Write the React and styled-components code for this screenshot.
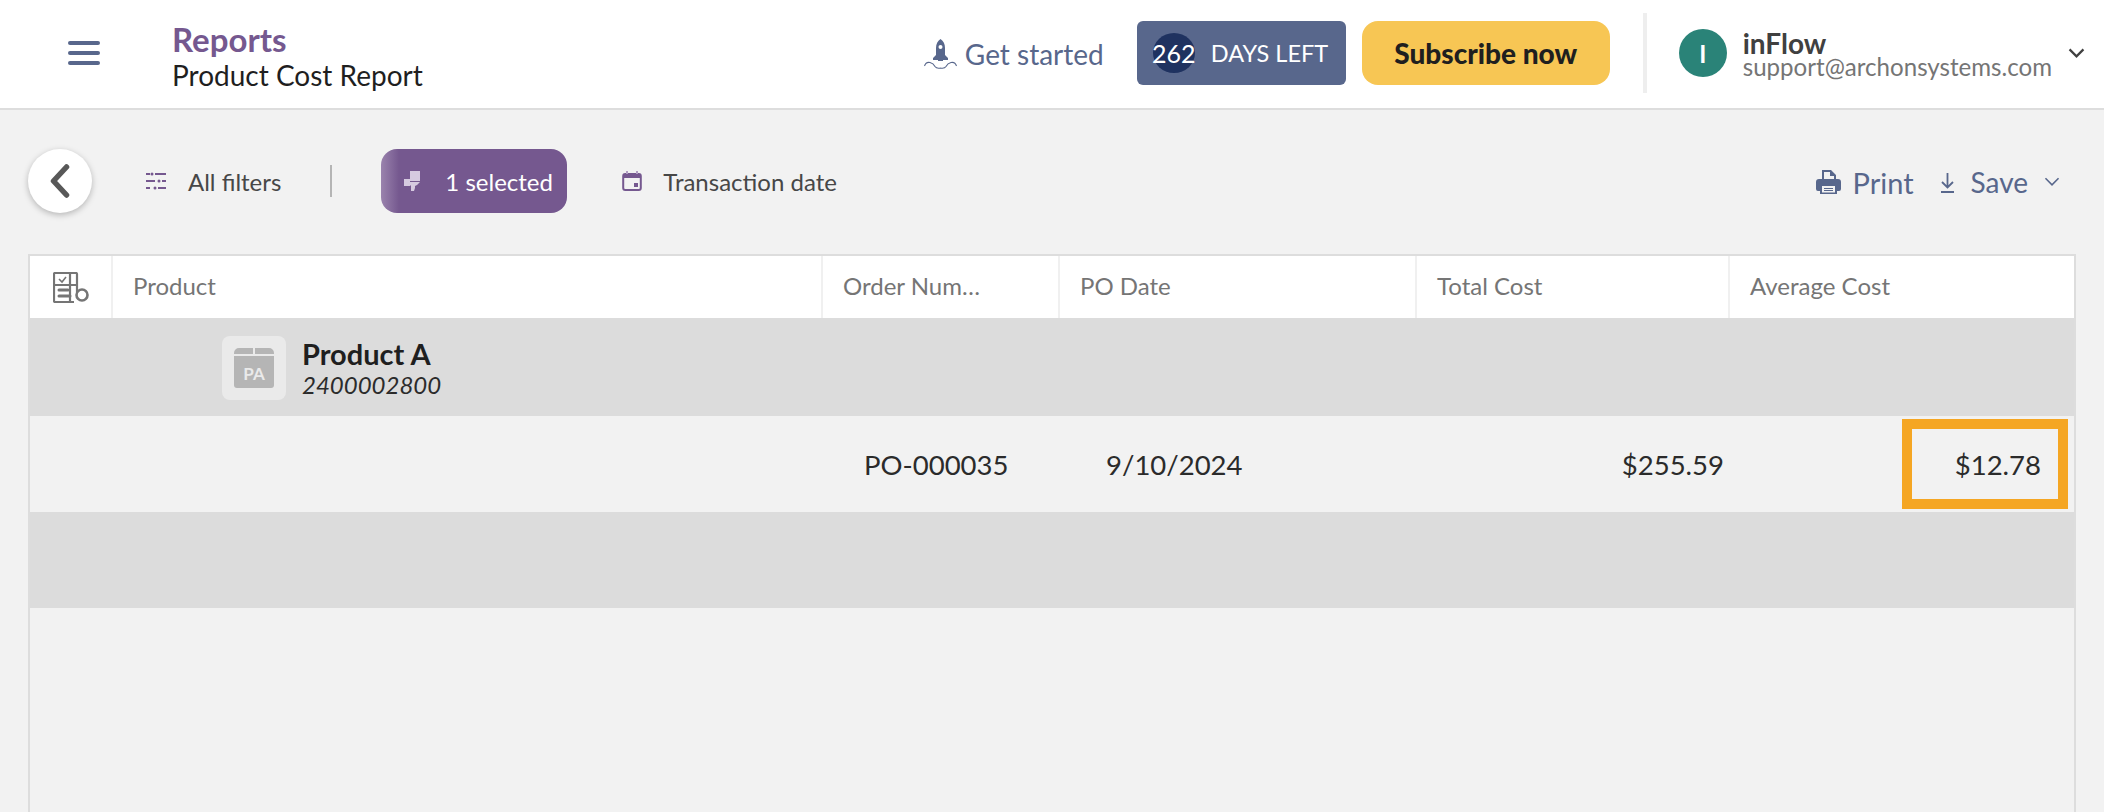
import React from "react";
import styled, { createGlobalStyle } from "styled-components";

const GlobalStyle = createGlobalStyle`
  html, body {
    margin: 0;
    height: 100%;
    background: #f2f2f2;
    font-family: Lato, "Open Sans", sans-serif;
    overflow: hidden;
  }
  * { box-sizing: border-box; }
`;

const Page = styled.div`
  width: 2104px;
  height: 812px;
  display: flex;
  flex-direction: column;
  overflow: hidden;
  background: #f2f2f2;
`;

const Header = styled.header`
  height: 110px;
  flex: none;
  display: flex;
  align-items: center;
  background: #fff;
  border-bottom: 2px solid #dddddd;
  padding: 0 19px 2px 68px;
`;

const MenuButton = styled.div`
  width: 32px;
  display: flex;
  flex-direction: column;
  gap: 6px;
  margin-right: 72px;
`;

const MenuBar = styled.span`
  height: 4px;
  border-radius: 2px;
  background: #58678c;
`;

const TitleBlock = styled.div`
  display: flex;
  flex-direction: column;
  padding-top: 7px;
`;

const Section = styled.div`
  font-size: 33px;
  line-height: 36px;
  font-weight: 700;
  color: #75588f;
`;

const PageName = styled.div`
  font-size: 28px;
  line-height: 36px;
  color: #1f1f1f;
`;

const HeaderRight = styled.div`
  margin-left: auto;
  display: flex;
  align-items: center;
`;

const GetStarted = styled.div`
  display: flex;
  align-items: center;
  gap: 8px;
  padding-top: 2px;
  font-size: 28px;
  color: #58678c;
  margin-right: 33px;
`;

const DaysBadge = styled.div`
  width: 209px;
  height: 64px;
  display: flex;
  align-items: center;
  padding-left: 16px;
  gap: 16px;
  border-radius: 6px;
  background: #58678c;
  color: #fff;
  font-size: 23.5px;
  white-space: nowrap;
  margin-right: 16px;
`;

const DaysCount = styled.span`
  width: 42px;
  height: 40px;
  flex: none;
  display: flex;
  align-items: center;
  justify-content: center;
  border-radius: 50%;
  background: #1f3260;
  font-size: 25px;
  white-space: nowrap;
`;

const SubscribeButton = styled.button`
  width: 248px;
  height: 64px;
  border: none;
  border-radius: 16px;
  background: #f7c654;
  color: #1f1f1f;
  font-family: inherit;
  font-size: 28px;
  font-weight: 900;
`;

const VerticalRule = styled.div`
  width: 4px;
  height: 80px;
  margin: 0 32px 0 33px;
  background: #eeeeee;
`;

const Avatar = styled.div`
  width: 48px;
  height: 48px;
  display: flex;
  align-items: center;
  justify-content: center;
  border-radius: 50%;
  background: #2a8378;
  color: #fff;
  font-size: 24px;
  font-weight: 700;
  margin-right: 16px;
`;

const Account = styled.div`
  display: flex;
  flex-direction: column;
  padding-top: 3px;
  margin-right: 16px;
`;

const AccountName = styled.div`
  font-size: 28px;
  line-height: 24px;
  font-weight: 700;
  color: #404040;
`;

const AccountEmail = styled.div`
  font-size: 24.1px;
  line-height: 24px;
  color: #757575;
`;

const Toolbar = styled.div`
  height: 144px;
  flex: none;
  display: flex;
  align-items: center;
  padding: 0 44px 2px 28px;
  font-size: 24px;
  color: #474747;
`;

const BackButton = styled.div`
  width: 64px;
  height: 64px;
  flex: none;
  display: flex;
  align-items: center;
  justify-content: center;
  border-radius: 50%;
  background: #fff;
  box-shadow: 0 2px 6px rgba(0, 0, 0, 0.25);
  margin-right: 54px;
`;

const FilterItem = styled.div`
  display: flex;
  align-items: center;
  gap: ${(props) => props.$gap}px;
`;

const ToolbarRule = styled.div`
  width: 2px;
  height: 32px;
  background: #b5b5b5;
  margin: 0 49px;
`;

const SelectedChip = styled.div`
  width: 186px;
  height: 64px;
  display: flex;
  align-items: center;
  gap: 24px;
  padding-left: 23px;
  border-radius: 16px;
  background: linear-gradient(90deg, #9a83ad 0, #75588f 18px);
  color: #fff;
  margin-right: 55px;
`;

const ToolbarActions = styled.div`
  margin-left: auto;
  display: flex;
  align-items: center;
  padding-top: 2px;
  color: #58678c;
  font-size: 28px;
`;

const ActionItem = styled.div`
  display: flex;
  align-items: center;
  gap: ${(props) => props.$gap}px;
  margin-left: ${(props) => props.$left}px;
  font-size: ${(props) => props.$size || 28}px;
`;

const Table = styled.div`
  flex: 1;
  margin: 0 28px 0 28px;
  border: solid #dddddd;
  border-width: 2px 2px 0 2px;
`;

const Row = styled.div`
  display: grid;
  grid-template-columns: 81px 710px 237px 357px 313px 1fr;
  height: ${(props) => props.$height}px;
  background: ${(props) => props.$bg};
`;

const HeadCell = styled.div`
  display: flex;
  align-items: center;
  padding-left: ${(props) => props.$pad || 20}px;
  padding-bottom: ${(props) => (props.$first ? 0 : 3)}px;
  border-left: ${(props) => (props.$first ? "none" : "2px solid #f0f0f0")};
  font-size: 24px;
  color: #757575;
  white-space: nowrap;
`;

const ProductCell = styled.div`
  grid-column: 2;
  display: flex;
  align-items: center;
  gap: 16px;
  padding: 2px 0 0 111px;
`;

const ProductThumb = styled.div`
  width: 64px;
  height: 64px;
  display: flex;
  align-items: center;
  justify-content: center;
  border-radius: 8px;
  background: #eaeaea;
`;

const ProductName = styled.div`
  font-size: 29px;
  line-height: 34px;
  font-weight: 700;
  color: #1f1f1f;
`;

const ProductCode = styled.div`
  font-size: 24px;
  line-height: 28px;
  font-style: italic;
  color: #2b2b2b;
`;

const DataCell = styled.div`
  grid-column: ${(props) => props.$col};
  display: flex;
  align-items: center;
  justify-content: ${(props) => (props.$right ? "flex-end" : "flex-start")};
  padding-left: ${(props) => props.$pad || 0}px;
  padding-right: ${(props) => (props.$right ? 4 : 0)}px;
  font-size: 27.5px;
  color: #2b2b2b;
`;

const Highlight = styled.div`
  width: 166px;
  height: 90px;
  margin: 0 2px 0 0;
  display: flex;
  align-items: center;
  justify-content: flex-end;
  padding-right: 17px;
  border: 10px solid #f5a623;
`;

const MenuIcon = () => (
  <MenuButton>
    <MenuBar />
    <MenuBar />
    <MenuBar />
  </MenuButton>
);

const RocketIcon = () => (
  <svg width="33" height="30" viewBox="0 0 33 30" fill="none">
    <path
      d="M16.500 0c3 2 4.500 5 4.500 9v7l3 3v2h-5v1h-5v-1H9v-2l3-3V9c0-4 1.500-7 4.500-9z"
      fill="#58678c"
    />
    <circle cx="16.500" cy="8" r="2" fill="#fff" />
    <path
      d="M.5 27c1-3 3.500-4 5.500-3.500 2.500.6 4 2 5 4 1 1.500 3 2 5.500 1.500M32.500 27c-1-3-3.500-4-5.500-3.500-2.500.6-4 2-5 4-1 1.500-3 2-5.500 1.500"
      stroke="#58678c"
      strokeWidth="1.100"
    />
  </svg>
);

const ChevronDown = ({ width, color, stroke }) => (
  <svg width={width} height={width * 0.6} viewBox="0 0 18 11" fill="none">
    <path d="M1.500 1.500 9 9l7.500-7.500" stroke={color} strokeWidth={stroke} />
  </svg>
);

const BackIcon = () => (
  <svg width="20" height="34" viewBox="0 0 20 34" fill="none">
    <path
      d="M16.500 3 3.500 17l13 14"
      stroke="#585858"
      strokeWidth="5.500"
      strokeLinecap="round"
      strokeLinejoin="round"
    />
  </svg>
);

const FiltersIcon = () => (
  <svg width="20" height="18" viewBox="0 0 20 18" fill="#75588f">
    <rect x="0" y="1" width="4" height="2" />
    <rect x="9" y="1" width="11" height="2" />
    <circle cx="6" cy="2" r="1.500" />
    <rect x="0" y="8" width="9" height="2" />
    <rect x="16" y="8" width="4" height="2" />
    <circle cx="13" cy="9" r="1.500" />
    <rect x="0" y="15" width="4" height="2" />
    <rect x="12" y="15" width="8" height="2" />
    <circle cx="9" cy="16" r="1.500" />
  </svg>
);

const SelectedIcon = () => (
  <svg width="17" height="21" viewBox="0 0 17 21" fill="#d6cae0">
    <rect x="6" y="0" width="10" height="10" />
    <rect x="0" y="8" width="6" height="7" />
    <path d="M6 11h10l-3 3-2 1v2l-1 3H7v-5l-1-1z" />
  </svg>
);

const CalendarIcon = () => (
  <svg width="20" height="20" viewBox="0 0 20 20" fill="none">
    <rect x="1.200" y="3" width="17.600" height="16" rx="2" stroke="#75588f" strokeWidth="2" />
    <rect x="1" y="3" width="18" height="4" fill="#75588f" />
    <rect x="4" y="0" width="2" height="3" fill="#b09dc2" />
    <rect x="14" y="0" width="2" height="3" fill="#b09dc2" />
    <rect x="12" y="12" width="4" height="4" fill="#75588f" />
  </svg>
);

const PrintIcon = () => (
  <svg width="25" height="24" viewBox="0 0 25 24" fill="#58678c">
    <path d="M6 0h9l5 5v5h-2V6h-4V2H8v8H6z" />
    <path d="M3 9h19a3 3 0 0 1 3 3v7a2 2 0 0 1-2 2h-2v3H4v-3H2a2 2 0 0 1-2-2v-7a3 3 0 0 1 3-3z" />
    <rect x="6" y="16" width="13" height="6.500" fill="#f2f2f2" />
    <rect x="8" y="18" width="9" height="1" />
    <rect x="8" y="20" width="9" height="1" />
  </svg>
);

const SaveIcon = () => (
  <svg width="15" height="21" viewBox="0 0 15 21" fill="none" stroke="#58678c" strokeWidth="1.800">
    <path d="M7.500 1v14M2 10l5.500 5.500L13 10M1 20h13" />
  </svg>
);

const ColumnsIcon = () => (
  <svg width="36" height="31" viewBox="0 0 36 31" fill="none" stroke="#757575">
    <path d="M24 20V2a1 1 0 0 0-1-1H2a1 1 0 0 0-1 1v27a1 1 0 0 0 1 1h19" strokeWidth="2.200" />
    <path d="M1 13h23M17 1v28" strokeWidth="2.200" />
    <path d="M6 7l3 3 4-5" strokeWidth="1.600" />
    <path d="M6 18h9M6 24h11" strokeWidth="3" strokeLinecap="round" />
    <circle cx="29" cy="23" r="5.500" strokeWidth="2.600" />
  </svg>
);

const BoxIcon = () => (
  <svg width="40" height="40" viewBox="0 0 40 40">
    <path d="M5 0h14v6H0v-1a5 5 0 0 1 5-5zM21 0h14a5 5 0 0 1 5 5v1H21z" fill="#b5b5b5" />
    <path d="M0 8h40v29a3 3 0 0 1-3 3H3a3 3 0 0 1-3-3z" fill="#b5b5b5" />
    <text
      x="20"
      y="32"
      textAnchor="middle"
      fontFamily="Lato, sans-serif"
      fontSize="17"
      fontWeight="700"
      fill="#eaeaea"
    >
      PA
    </text>
  </svg>
);

const App = () => {
  return (
    <Page>
      <GlobalStyle />
      <Header>
        <MenuIcon />
        <TitleBlock>
          <Section>Reports</Section>
          <PageName>Product Cost Report</PageName>
        </TitleBlock>
        <HeaderRight>
          <GetStarted>
            <RocketIcon />
            Get started
          </GetStarted>
          <DaysBadge>
            <DaysCount>262</DaysCount>
            DAYS LEFT
          </DaysBadge>
          <SubscribeButton>Subscribe now</SubscribeButton>
          <VerticalRule />
          <Avatar>I</Avatar>
          <Account>
            <AccountName>inFlow</AccountName>
            <AccountEmail>support@archonsystems.com</AccountEmail>
          </Account>
          <ChevronDown width={17} color="#404040" stroke={2.4} />
        </HeaderRight>
      </Header>

      <Toolbar>
        <BackButton>
          <BackIcon />
        </BackButton>
        <FilterItem $gap={22}>
          <FiltersIcon />
          All filters
        </FilterItem>
        <ToolbarRule />
        <SelectedChip>
          <SelectedIcon />1 selected
        </SelectedChip>
        <FilterItem $gap={21}>
          <CalendarIcon />
          Transaction date
        </FilterItem>
        <ToolbarActions>
          <ActionItem $gap={12} $left={0} $size={29}>
            <PrintIcon />
            Print
          </ActionItem>
          <ActionItem $gap={16} $left={26}>
            <SaveIcon />
            Save
          </ActionItem>
          <ActionItem $gap={0} $left={16}>
            <ChevronDown width={16} color="#58678c" stroke={1.8} />
          </ActionItem>
        </ToolbarActions>
      </Toolbar>

      <Table>
        <Row $height={62} $bg="#fff">
          <HeadCell $first $pad={23}>
            <ColumnsIcon />
          </HeadCell>
          <HeadCell>Product</HeadCell>
          <HeadCell>Order Num…</HeadCell>
          <HeadCell>PO Date</HeadCell>
          <HeadCell>Total Cost</HeadCell>
          <HeadCell>Average Cost</HeadCell>
        </Row>
        <Row $height={98} $bg="#dcdcdc">
          <ProductCell>
            <ProductThumb>
              <BoxIcon />
            </ProductThumb>
            <div>
              <ProductName>Product A</ProductName>
              <ProductCode>2400002800</ProductCode>
            </div>
          </ProductCell>
        </Row>
        <Row $height={96} $bg="#f2f2f2">
          <DataCell $col={3} $pad={43}>
            PO-000035
          </DataCell>
          <DataCell $col={4} $pad={48}>
            9/10/2024
          </DataCell>
          <DataCell $col={5} $right>
            $255.59
          </DataCell>
          <DataCell $col={6} $right>
            <Highlight>$12.78</Highlight>
          </DataCell>
        </Row>
        <Row $height={96} $bg="#dcdcdc" />
      </Table>
    </Page>
  );
};

export default App;
